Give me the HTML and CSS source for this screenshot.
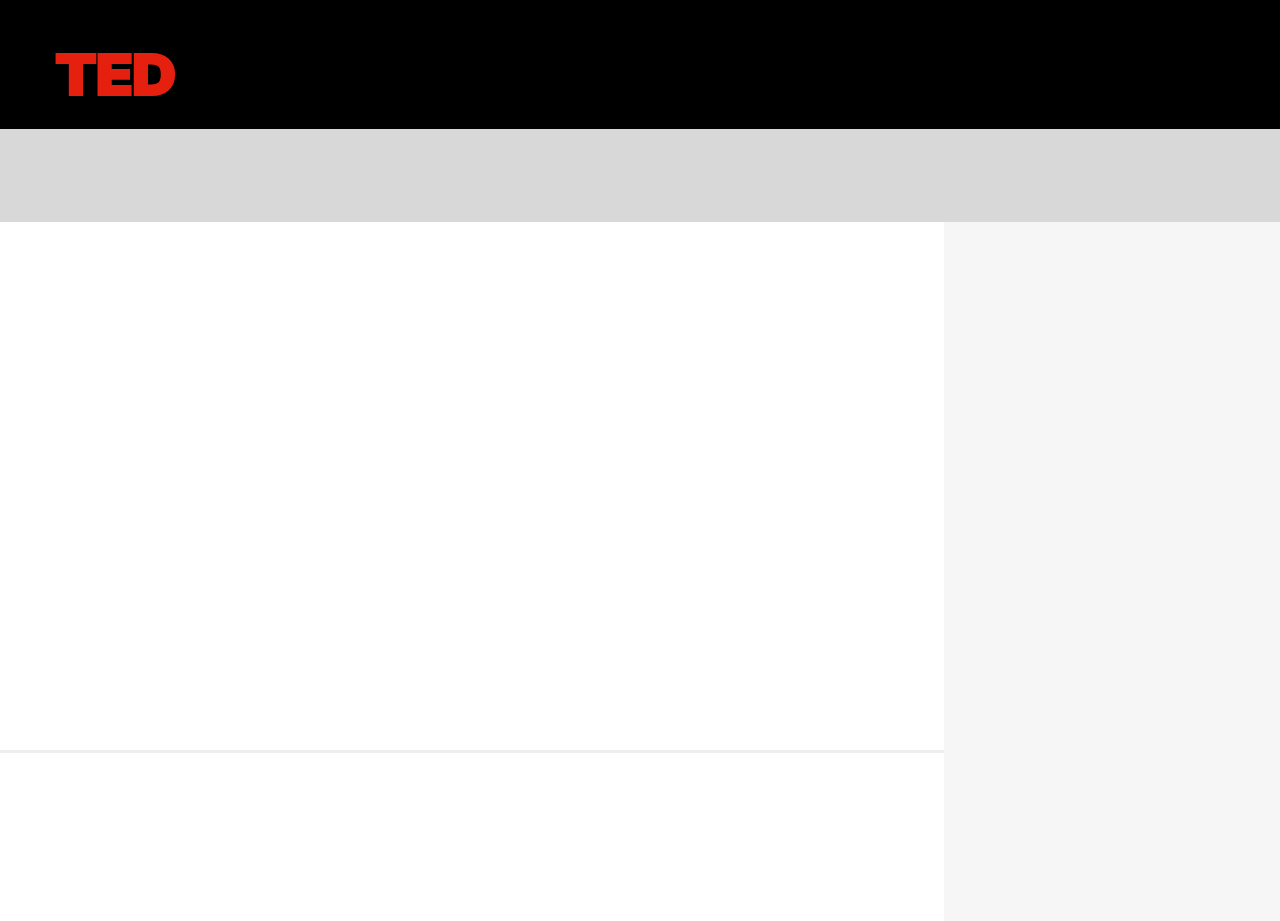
FILE: index.html
```html
<!DOCTYPE html>
<html lang="en">
<head>
<meta charset="utf-8">
<title>TED</title>
<link rel="stylesheet" href="styles.css">
</head>
<body>
<header class="site-header"><span class="logo">TED</span></header>
<div class="band"></div>
<div class="content">
  <main class="main">
    <section class="primary"></section>
    <section class="secondary"></section>
  </main>
  <aside class="sidebar"></aside>
</div>
</body>
</html>
```
FILE: styles.css
```css
html, body { margin: 0; height: 100%; }
body { display: flex; flex-direction: column; height: 921px; overflow: hidden; background: #fff; }
.site-header { height: 129px; background: #000; padding: 39px 0 0 55px; box-sizing: border-box; flex: none; }
.logo { display: inline-block; font-family: Inter, "Liberation Sans", sans-serif; font-weight: 900; font-size: 56.5px; line-height: 71px; letter-spacing: -1px; color: #e5200f; -webkit-text-stroke: 2px #e5200f; transform: scaleX(1.08); transform-origin: left center; }
.band { height: 93px; background: #d8d8d8; flex: none; }
.content { display: flex; flex: 1; min-height: 0; }
.main { width: 944px; flex: none; display: flex; flex-direction: column; }
.primary { height: 528px; border-bottom: 3px solid #eeeeee; flex: none; }
.secondary { flex: 1; }
.sidebar { flex: 1; background: #f6f6f6; }
```
